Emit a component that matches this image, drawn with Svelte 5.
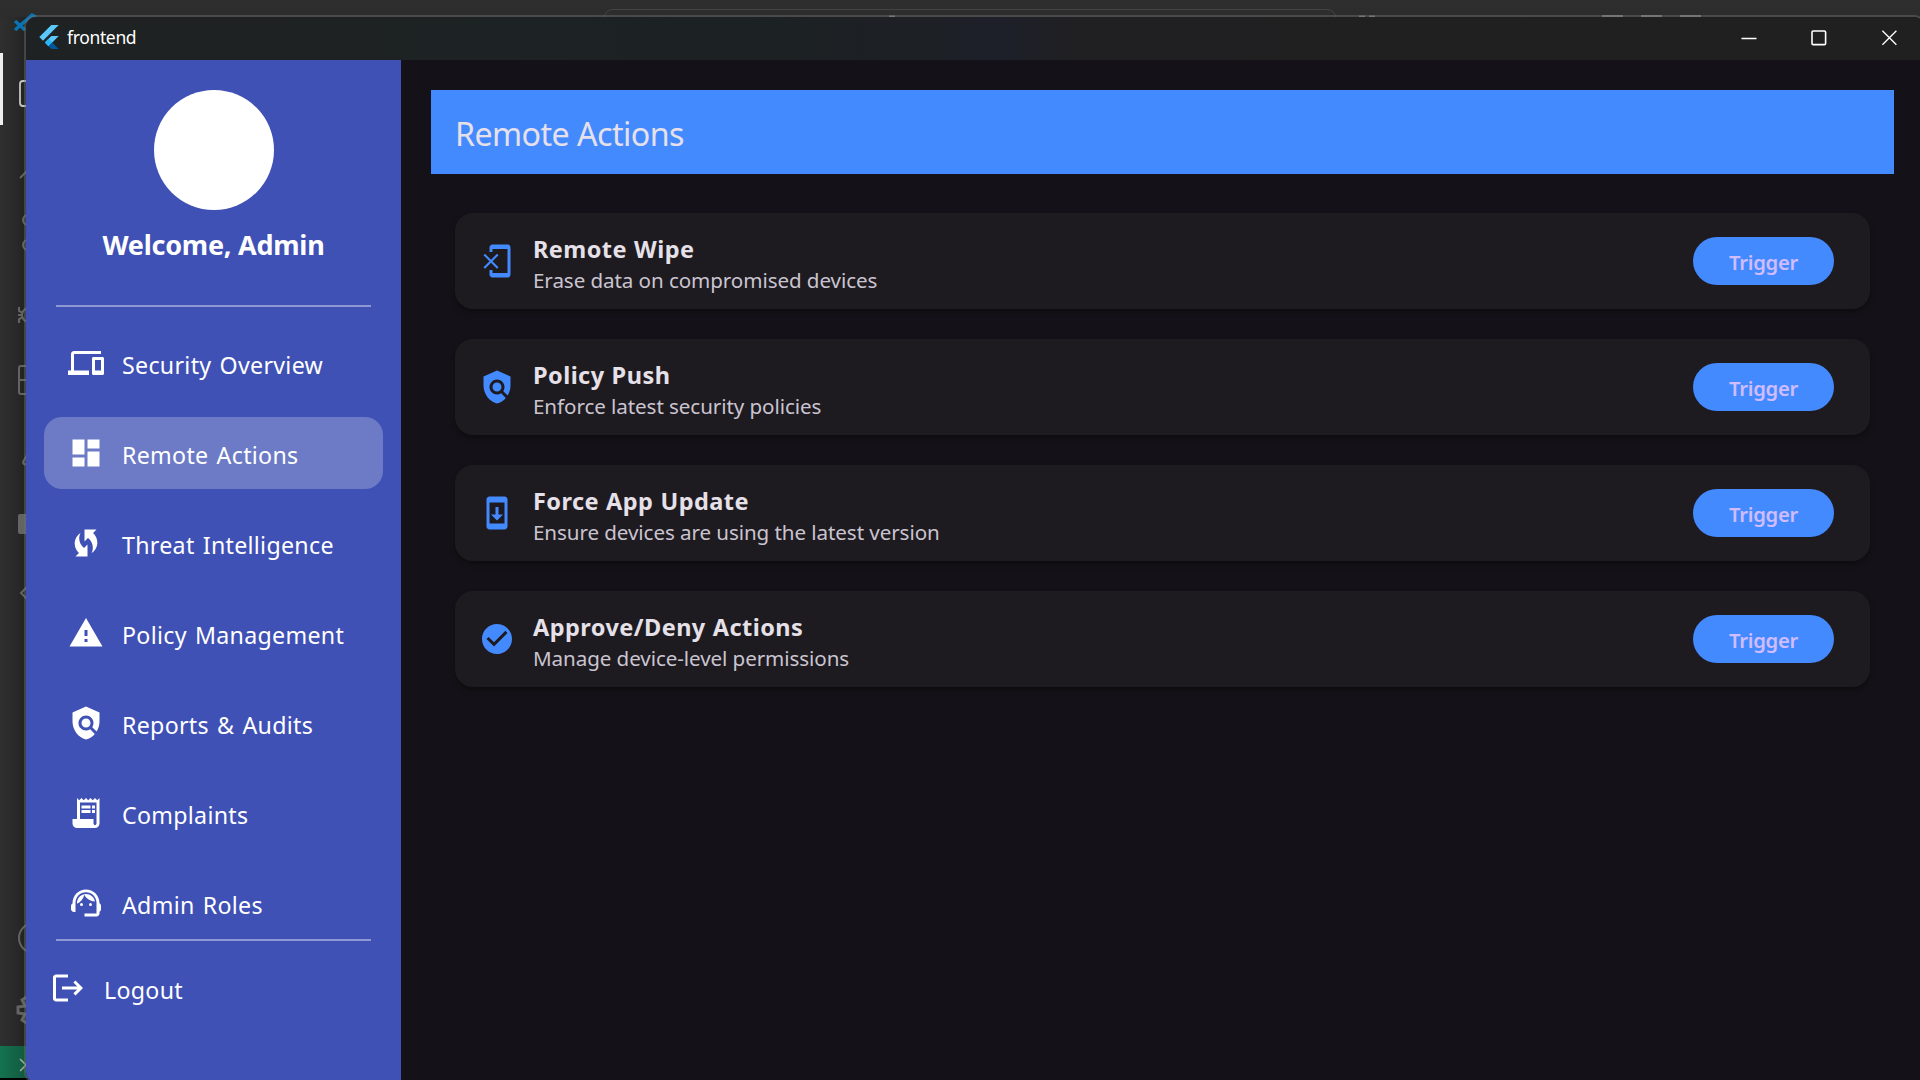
<script>
  const icons = {
    devices: 'M4 6h18V4H4c-1.1 0-2 .9-2 2v11H0v3h14v-3H4V6zm19 2h-6c-.55 0-1 .45-1 1v10c0 .55.45 1 1 1h6c.55 0 1-.45 1-1V9c0-.55-.45-1-1-1zm-1 9h-4v-7h4v7z',
    dashboard: 'M3 13h8V3H3v10zm0 8h8v-6H3v6zm10 0h8V11h-8v10zm0-18v6h8V3h-8z',
    setup: 'M16.71 5.29 19 3h-8v8l2.3-2.3c1.97 1.46 3.25 3.78 3.25 6.42 0 1.31-.32 2.54-.88 3.63 2.33-1.52 3.88-4.14 3.88-7.13 0-2.52-1.11-4.77-2.84-6.33zM7.46 8.88c0-1.31.32-2.54.88-3.63-2.33 1.52-3.88 4.14-3.88 7.13 0 2.52 1.1 4.77 2.84 6.33L5 21h8v-8l-2.3 2.3c-1.96-1.46-3.24-3.78-3.24-6.42z',
    warning: 'M1 21h22L12 2 1 21zm12-3h-2v-2h2v2zm0-4h-2v-4h2v4z',
    policy: 'M21 5l-9-4-9 4v6c0 5.55 3.84 10.74 9 12 2.3-.56 4.33-1.9 5.88-3.71l-3.12-3.12c-1.94 1.29-4.58 1.07-6.29-.64-1.95-1.95-1.95-5.12 0-7.07 1.95-1.95 5.12-1.95 7.07 0 1.71 1.71 1.92 4.35.64 6.29l2.9 2.9C20.29 15.69 21 13.38 21 11V5zM12 9a3 3 0 1 0 0 6a3 3 0 1 0 0-6z',
    receipt: 'M19.5 3.5 18 2l-1.5 1.5L15 2l-1.5 1.5L12 2l-1.5 1.5L9 2 7.5 3.5 6 2v14H3v3c0 1.66 1.34 3 3 3h12c1.66 0 3-1.34 3-3V2l-1.5 1.5zM19 19c0 .55-.45 1-1 1s-1-.45-1-1v-3H8V5h11v14zM9 7h6v2H9zM16 7h2v2h-2zM9 10h6v2H9zM16 10h2v2h-2z',
    agent: 'M21 12.22C21 6.73 16.74 3 12 3c-4.69 0-9 3.65-9 9.28-.6.34-1 .98-1 1.72v2c0 1.1.9 2 2 2h1v-6.1c0-3.87 3.13-7 7-7s7 3.13 7 7V19h-8v2h8c1.1 0 2-.9 2-2v-1.22c.59-.31 1-.92 1-1.64v-2.3c0-.7-.41-1.31-1-1.62zM9 12a1 1 0 1 0 0 2a1 1 0 1 0 0-2zM15 12a1 1 0 1 0 0 2a1 1 0 1 0 0-2zM18 11.03C17.52 8.18 15.04 6 12.05 6c-3.03 0-6.29 2.51-6.03 6.45 2.47-1.01 4.33-3.21 4.86-5.89 1.31 2.63 4 4.44 7.12 4.47z',
    logout: 'M17 7l-1.41 1.41L18.17 11H8v2h10.17l-2.58 2.58L17 17l5-5zM4 5h8V3H4c-1.1 0-2 .9-2 2v14c0 1.1.9 2 2 2h8v-2H4V5z',
    erase: 'M13 8.2l-1-1-4 4-4-4-1 1 4 4-4 4 1 1 4-4 4 4 1-1-4-4 4-4zM19 1H9c-1.1 0-2 .9-2 2v3h2V4h10v16H9v-2H7v3c0 1.1.9 2 2 2h10c1.1 0 2-.9 2-2V3c0-1.1-.9-2-2-2z',
    update: 'M17 1.01 7 1c-1.1 0-2 .9-2 2v18c0 1.1.9 2 2 2h10c1.1 0 2-.9 2-2V3c0-1.1-.9-1.99-2-1.99zM17 19H7V5h10v14zm-1-6h-3V8h-2v5H8l4 4 4-4z',
    check: 'M12 2C6.48 2 2 6.48 2 12s4.48 10 10 10 10-4.48 10-10S17.52 2 12 2zm-2 15l-5-5 1.41-1.41L10 14.17l7.59-7.59L19 8l-9 9z'
  };
  const nav = [
    ['devices', 'Security Overview'],
    ['dashboard', 'Remote Actions'],
    ['setup', 'Threat Intelligence'],
    ['warning', 'Policy Management'],
    ['policy', 'Reports & Audits'],
    ['receipt', 'Complaints'],
    ['agent', 'Admin Roles']
  ];
  const actions = [
    ['erase', 'Remote Wipe', 'Erase data on compromised devices'],
    ['policy', 'Policy Push', 'Enforce latest security policies'],
    ['update', 'Force App Update', 'Ensure devices are using the latest version'],
    ['check', 'Approve/Deny Actions', 'Manage device-level permissions']
  ];
  let selected = $state('Remote Actions');
</script>

{#snippet icon(name)}
  <svg class="icon" viewBox="0 0 24 24" aria-hidden="true"><path d={icons[name]} /></svg>
{/snippet}

<div class="desktop">
  <!-- Editor window that sits behind the app -->
  <svg class="behind" viewBox="0 0 1920 1080" aria-hidden="true">
    <defs>
      <linearGradient id="side"><stop offset="0" stop-color="#2f2f2f" /><stop offset=".5" stop-color="#2a2a2a" /><stop offset="1" stop-color="#212121" /></linearGradient>
      <linearGradient id="top" x2="0" y2="1"><stop offset="0" stop-color="#2e2e2e" /><stop offset="1" stop-color="#292929" /></linearGradient>
      <linearGradient id="status"><stop offset="0" stop-color="#157350" /><stop offset="1" stop-color="#11573d" /></linearGradient>
    </defs>
    <rect width="1920" height="40" fill="url(#top)" />
    <rect y="17" width="28" height="1029" fill="url(#side)" />
    <rect y="1046" width="28" height="32" fill="url(#status)" />
    <rect y="1078" width="28" height="2" fill="#000" />
    <path d="M15 21l10 9M15 30L32 15l4 2" fill="none" stroke="#0873b4" stroke-width="3.4" />
    <rect y="53" width="3" height="72" fill="#efefef" />
    <rect x="20" y="81" width="20" height="25" rx="3" fill="none" stroke="#c4c4c4" stroke-width="1.8" />
    <g fill="none" stroke="#636363" stroke-width="2">
      <path d="M20 178l7-7" />
      <circle cx="28" cy="220" r="5" /><circle cx="28" cy="245" r="5" />
      <circle cx="29" cy="315" r="7" /><path d="M19 307v4l4 2M18 315h5M19 323v-4l4-2" />
      <rect x="19" y="366" width="20" height="28" rx="2" /><path d="M19 380h9" />
      <path d="M27 455l-4 7q0 3 4 2" />
      <path d="M27 587l-6 6 6 6" />
      <circle cx="34" cy="938" r="15" />
      <path d="M28 996l-6 4 3 6-7 1v6l7 1-3 6 6 4" stroke-width="3" />
    </g>
    <rect x="18" y="514" width="14" height="20" rx="2" fill="#646464" />
    <path d="M20 1059l6 6-6 6" fill="none" stroke="#a2a9a4" stroke-width="1.5" />
    <rect x="604.5" y="9.5" width="731" height="30" rx="8" fill="#2d2d2d" stroke="#444" />
    <g fill="#7a7a7a">
      <rect x="889" y="15.5" width="6" height="2" />
      <rect x="1359" y="15.5" width="6" height="2" /><rect x="1369" y="15.5" width="6" height="2" />
      <rect x="1602" y="15" width="21" height="2" /><rect x="1641" y="15" width="21" height="2" /><rect x="1680" y="15" width="21" height="2" />
    </g>
  </svg>

  <div class="window">
    <header class="titlebar">
      <svg class="flutter" viewBox="0 0 24 24" aria-hidden="true">
        <path fill="#5ac8fa" d="M14.3 0 2.3 12 6 15.7 21.7 0zM14.3 11.07h7.4L11.55 21.22 7.86 17.53z" />
        <path fill="#29b6f6" d="M7.86 17.53l3.69-3.69 3.69 3.69-3.69 3.69z" />
        <path fill="#01579b" d="M15.24 17.53 21.7 24h-7.37l-2.78-2.78z" />
      </svg>
      <span class="name">frontend</span>
      <div class="controls">
        <svg viewBox="0 0 16 16" aria-label="Minimize"><path d="M.5 8.5H15.5" /></svg>
        <svg viewBox="0 0 16 16" aria-label="Maximize"><rect class="frame" x="1" y="1" width="13.6" height="13.6" rx="1.2" /></svg>
        <svg viewBox="0 0 16 16" aria-label="Close"><path d="M1.4 .8 15.4 14.8M15.4 .8 1.4 14.8" /></svg>
      </div>
    </header>

    <div class="body">
      <aside>
        <div class="avatar"></div>
        <h2>Welcome, Admin</h2>
        <div class="divider"></div>
        <nav>
          {#each nav as [glyph, label]}
            <button class="tile" class:active={label === selected} onclick={() => (selected = label)}>
              {@render icon(glyph)}<span>{label}</span>
            </button>
          {/each}
        </nav>
        <div class="divider"></div>
        <button class="tile logout">{@render icon('logout')}<span>Logout</span></button>
      </aside>

      <main>
        <h1>Remote Actions</h1>
        <div class="cards">
          {#each actions as [glyph, title, note]}
            <section class="card">
              {@render icon(glyph)}
              <div class="copy"><h3>{title}</h3><p>{note}</p></div>
              <button class="trigger">Trigger</button>
            </section>
          {/each}
        </div>
      </main>
    </div>
  </div>
</div>

<style>
  :global(body) { margin: 0; background: #2b2b2b; overflow: hidden; }
  * { box-sizing: border-box; }
  button { border: 0; background: none; font: inherit; text-align: left; }
  h1, h2, h3, p { margin: 0; }
  .desktop { position: relative; width: 1920px; height: 1080px; overflow: hidden; font-family: 'Noto Sans', 'Open Sans', sans-serif; }
  .behind { display: block; width: 1920px; height: 1080px; }
  .window { position: absolute; left: 24px; top: 15px; width: 1902px; height: 1069px; display: flex; flex-direction: column; border: 2px solid rgba(110, 110, 110, 0.45); border-radius: 12px; overflow: hidden; background: #141218; background-clip: padding-box; }
  .titlebar { flex: none; height: 43px; display: flex; align-items: center; padding-left: 11px; background: linear-gradient(90deg, #1f2222 0, #1c2224 36%, #1d2025 48%, #1d202a 51%, #202023 55%, #202020 75%); color: #fff; }
  .flutter { width: 24px; height: 24px; margin-top: -3px; }
  .name { margin-left: 6px; font-size: 17.5px; letter-spacing: -0.35px; line-height: 24px; margin-top: -4px; }
  .controls { margin-left: auto; display: flex; }
  .controls svg { width: 70px; height: 16px; fill: none; stroke: #fff; stroke-width: 1.3; margin-top: -1px; }
  .controls .frame { stroke-width: 1.6; }
  .body { flex: 1; display: flex; min-height: 0; }
  aside { flex: none; width: 375px; padding-top: 30px; background: #3f51b5; color: #fff; }
  .avatar { width: 120px; height: 120px; margin: 0 auto; border-radius: 50%; background: #fff; }
  h2 { margin: 17px 0 42px; font-size: 27px; line-height: 36px; text-align: center; letter-spacing: -0.25px; }
  .divider { height: 2px; margin: 0 30px; background: #8d98d2; }
  nav { display: flex; flex-direction: column; gap: 18px; margin: 20px 18px 0; }
  .tile { display: flex; align-items: center; gap: 18px; height: 72px; padding: 0 24px; border-radius: 18px; color: #fff; font-size: 23.2px; letter-spacing: 0.3px; word-spacing: 1.8px; white-space: nowrap; }
  .tile span { padding-top: 4px; line-height: 32px; }
  .tile.active { background: #6d7bc6; }
  .logout { margin-top: 11px; }
  .icon { flex: none; width: 36px; height: 36px; fill: currentColor; }
  main { flex: 1; padding: 30px; }
  h1 { height: 84px; padding: 2px 0 0 24px; background: #448aff; color: #e6e0e9; font-size: 32.2px; font-weight: 400; line-height: 84px; letter-spacing: -0.55px; }
  .cards { display: flex; flex-direction: column; gap: 30px; padding: 39px 24px 0; }
  .card { display: flex; height: 96px; padding: 0 36px 0 24px; align-items: center; border-radius: 18px; background: #1d1b20; color: #448aff; box-shadow: 0 3px 5px rgba(0, 0, 0, 0.35); }
  .copy { margin-left: 18px; padding-top: 6px; }
  h3 { font-size: 23.5px; line-height: 32px; color: #e6e0e9; letter-spacing: 0.45px; word-spacing: 0.5px; }
  p { font-size: 20.6px; line-height: 31px; color: #cac4d0; letter-spacing: -0.08px; }
  .trigger { margin-left: auto; width: 141px; height: 48px; padding: 2px 0 0; border-radius: 24px; background: #448aff; color: #d0bcff; font-size: 20.3px; font-weight: 600; letter-spacing: -0.3px; text-align: center; }
</style>
